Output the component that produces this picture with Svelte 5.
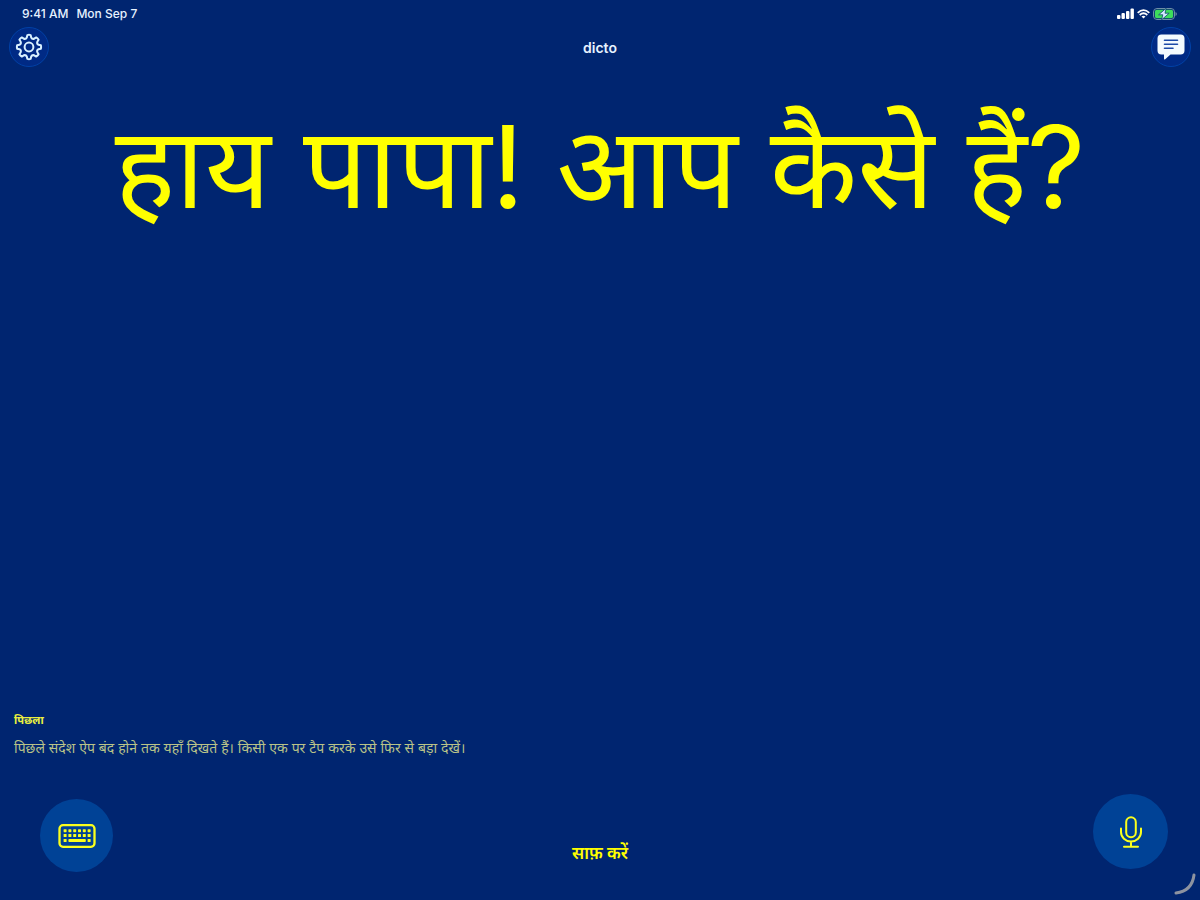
<script>
  export let message = 'हाय पापा! आप कैसे हैं?';

  // Eight-tooth cog outline, one tooth every 45 degrees
  const cogPath = (outer, inner) => {
    const at = (radius, deg) => {
      const a = ((deg - 90) * Math.PI) / 180;
      return `${(radius * Math.cos(a)).toFixed(2)} ${(radius * Math.sin(a)).toFixed(2)}`;
    };
    let d = `M${at(outer, -8)}`;
    for (let t = 0; t < 360; t += 45) {
      d += `Q${at(outer + 0.4, t)} ${at(outer, t + 8)}`;
      d += `L${at(inner + 0.8, t + 13)}`;
      d += `Q${at(inner - 0.8, t + 22.5)} ${at(inner + 0.8, t + 32)}`;
      d += `L${at(outer, t + 37)}`;
    }
    return d + 'Z';
  };

  const cog = cogPath(12, 9);
  const keyRows = [5.2, 10];

  const clear = () => (message = '');
</script>

<div class="screen">
  <header>
    <div class="status">
      <div class="clock"><span>9:41 AM</span><span>Mon Sep 7</span></div>
      <div class="signals">
        <svg width="17" height="11" viewBox="0 0 17 11" fill="#fff" aria-hidden="true">
          <rect x="0" y="7" width="3.4" height="4" rx="1" />
          <rect x="4.5" y="5" width="3.4" height="6" rx="1" />
          <rect x="9" y="3" width="3.4" height="8" rx="1" />
          <rect x="13.5" y="0.5" width="3.4" height="10.5" rx="1" />
        </svg>
        <svg width="13" height="10" viewBox="0 0 13 10" fill="none" stroke="#fff" stroke-width="1.8" aria-hidden="true">
          <path d="M0.7 3.8Q6.5-1.6 12.3 3.8M2.7 6Q6.5 2.6 10.3 6" />
          <path d="M6.5 9.5L4.5 7.5Q6.5 6 8.5 7.5Z" fill="#fff" stroke="none" />
        </svg>
        <svg width="24" height="12" viewBox="0 0 24 12" aria-hidden="true">
          <rect x="0.5" y="0.5" width="21" height="11" rx="3.5" fill="none" stroke="#6f8fa8" />
          <rect x="1.8" y="1.8" width="18.4" height="8.4" rx="2.2" fill="#3ddc5c" />
          <path d="M22.5 4v4q1.3-.6 1.3-2t-1.3-2z" fill="#6f8fa8" />
          <path d="M13.2 0.2L5.6 6.8h4.2L8.6 11.8l7.6-6.6h-4.2z" fill="#d5e8ff" stroke="#0a4a6a" stroke-width="0.8" />
        </svg>
      </div>
    </div>

    <nav>
      <button class="round" aria-label="Settings">
        <svg width="28" height="28" viewBox="-14 -14 28 28" fill="none" stroke="#d9f1ff" stroke-width="2" stroke-linejoin="round" aria-hidden="true">
          <path d={cog} />
          <circle r="4.4" />
        </svg>
      </button>
      <h1>dicto</h1>
      <button class="round" aria-label="Messages">
        <svg width="28" height="26" viewBox="0 0 28 26" aria-hidden="true">
          <path d="M4.5 0.5h19a4 4 0 0 1 4 4v12a4 4 0 0 1-4 4H13.5L8.2 25.2Q7 26 7 24.6V20.5H4.5a4 4 0 0 1-4-4v-12a4 4 0 0 1 4-4z" fill="#f4fbff" />
          <path d="M7.5 6.3h13M7.5 10.3h13M7.5 14.3h8.5" stroke="#1c4aa8" stroke-width="1.6" stroke-linecap="round" />
        </svg>
      </button>
    </nav>
  </header>

  <main><p>{message}</p></main>

  <section class="history">
    <h2>पिछला</h2>
    <p>पिछले संदेश ऐप बंद होने तक यहाँ दिखते हैं। किसी एक पर टैप करके उसे फिर से बड़ा देखें।</p>
  </section>

  <footer>
    <button class="action keyboard" aria-label="Keyboard">
      <svg width="38" height="24" viewBox="0 0 38 24" fill="#faff1c" aria-hidden="true">
        <rect x="1.5" y="1.2" width="35" height="21.6" rx="3.5" fill="none" stroke="#faff1c" stroke-width="2.3" />
        {#each keyRows as y}
          {#each [0, 1, 2, 3, 4, 5] as col}
            <rect x={5.6 + col * 4.8} {y} width="3" height="3" rx="0.6" />
          {/each}
        {/each}
        <rect x="5.6" y="15" width="3" height="3" rx="0.6" />
        <rect x="10.4" y="15" width="17.4" height="3" rx="0.8" />
        <rect x="29.6" y="15" width="3" height="3" rx="0.6" />
      </svg>
    </button>
    <button class="clear" on:click={clear}>साफ़ करें</button>
    <button class="action mic" aria-label="Microphone">
      <svg width="24" height="32" viewBox="0 0 24 32" fill="none" stroke="#faff1c" stroke-width="2" stroke-linecap="round" aria-hidden="true">
        <rect x="7.2" y="1.2" width="9.6" height="20" rx="4.8" />
        <path d="M2 12.5v3.5a10 9.5 0 0 0 20 0v-3.5M12 25.5v5M5 30.8h14" />
      </svg>
    </button>
  </footer>

  <svg class="corner" width="24" height="24" viewBox="0 0 24 24" fill="none" stroke="#8d93a0" stroke-width="3" stroke-linecap="round" aria-hidden="true">
    <path d="M20 2Q18 18 2 20" />
  </svg>
</div>

<style>
  :global(body) {
    margin: 0;
    background: #002570;
  }

  .screen {
    position: relative;
    display: flex;
    flex-direction: column;
    box-sizing: border-box;
    min-height: 100vh;
    background: #002570;
    color: #ffff00;
    font-family: Inter, 'Noto Sans', sans-serif;
  }

  h1, h2, p {
    margin: 0;
  }

  button {
    display: flex;
    align-items: center;
    justify-content: center;
    padding: 0;
    border: 0;
    background: none;
    color: inherit;
    font-family: inherit;
    cursor: pointer;
  }

  .status {
    display: flex;
    justify-content: space-between;
    align-items: center;
    height: 27px;
    padding: 0 23px 0 22px;
  }

  .clock {
    display: flex;
    gap: 8px;
    color: #e6f2ff;
    font-size: 12px;
    font-weight: 500;
  }

  .signals {
    display: flex;
    align-items: center;
    gap: 3px;
  }

  nav {
    display: flex;
    justify-content: space-between;
    align-items: center;
    height: 40px;
    padding: 0 9px;
  }

  h1 {
    color: #e6f2ff;
    font-size: 14px;
    font-weight: 600;
  }

  .round {
    box-sizing: border-box;
    width: 40px;
    height: 40px;
    border: 1px solid #0041a6;
    border-radius: 50%;
    background: #002a85;
  }

  main {
    flex: 1;
    padding: 0 16px;
  }

  main p {
    font-size: 114px;
    line-height: 200px;
    text-align: center;
  }

  .history {
    padding: 0 14px;
  }

  h2 {
    font-size: 11px;
    line-height: 20px;
    font-weight: 700;
    color: #eaf040;
  }

  .history p {
    margin-top: 8px;
    font-size: 14px;
    line-height: 20px;
    color: #b9c388;
  }

  footer {
    display: grid;
    grid-template-columns: 1fr auto 1fr;
    grid-template-rows: 78px;
    align-items: end;
    padding: 36px 32px 28px 32px;
  }

  .action {
    border-radius: 50%;
    background: #004296;
  }

  .keyboard {
    width: 73px;
    height: 73px;
    margin-left: 8px;
  }

  .mic {
    align-self: start;
    justify-self: end;
    width: 75px;
    height: 75px;
  }

  .clear {
    height: 40px;
    font-size: 17px;
    font-weight: 600;
  }

  .corner {
    position: absolute;
    right: 2px;
    bottom: 3px;
  }
</style>
